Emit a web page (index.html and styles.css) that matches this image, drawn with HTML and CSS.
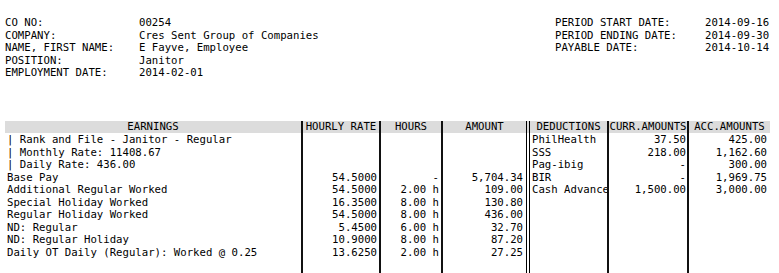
FILE: index.html
```html
<!DOCTYPE html>
<html>
<head>
<meta charset="utf-8">
<title>Payslip</title>
<link rel="stylesheet" href="styles.css">
</head>
<body>
<div class="info">
  <div class="info-block">
    <div class="info-row"><span class="lbl-l">CO NO:</span><span>00254</span></div>
    <div class="info-row"><span class="lbl-l">COMPANY:</span><span>Cres Sent Group of Companies</span></div>
    <div class="info-row"><span class="lbl-l">NAME, FIRST NAME:</span><span>E Fayve, Employee</span></div>
    <div class="info-row"><span class="lbl-l">POSITION:</span><span>Janitor</span></div>
    <div class="info-row"><span class="lbl-l">EMPLOYMENT DATE:</span><span>2014-02-01</span></div>
  </div>
  <div class="info-block">
    <div class="info-row"><span class="lbl-r">PERIOD START DATE:</span><span class="val-r">2014-09-16</span></div>
    <div class="info-row"><span class="lbl-r">PERIOD ENDING DATE:</span><span class="val-r">2014-09-30</span></div>
    <div class="info-row"><span class="lbl-r">PAYABLE DATE:</span><span class="val-r">2014-10-14</span></div>
  </div>
</div>

<div class="slip">
  <div class="hd">EARNINGS</div>
  <div class="hd sep">HOURLY RATE</div>
  <div class="hd sep">HOURS</div>
  <div class="hd sep">AMOUNT</div>
  <div class="hd dbl">DEDUCTIONS</div>
  <div class="hd sep">CURR.AMOUNTS</div>
  <div class="hd sep">ACC.AMOUNTS</div>

  <div class="bd left">
    <div class="ln">| Rank and File - Janitor - Regular</div>
    <div class="ln">| Monthly Rate: 11408.67</div>
    <div class="ln">| Daily Rate: 436.00</div>
    <div class="ln">Base Pay</div>
    <div class="ln">Additional Regular Worked</div>
    <div class="ln">Special Holiday Worked</div>
    <div class="ln">Regular Holiday Worked</div>
    <div class="ln">ND: Regular</div>
    <div class="ln">ND: Regular Holiday</div>
    <div class="ln">Daily OT Daily (Regular): Worked @ 0.25</div>
  </div>
  <div class="bd sep num">
    <div class="ln">&nbsp;</div>
    <div class="ln">&nbsp;</div>
    <div class="ln">&nbsp;</div>
    <div class="ln">54.5000</div>
    <div class="ln">54.5000</div>
    <div class="ln">16.3500</div>
    <div class="ln">54.5000</div>
    <div class="ln">5.4500</div>
    <div class="ln">10.9000</div>
    <div class="ln">13.6250</div>
  </div>
  <div class="bd sep num">
    <div class="ln">&nbsp;</div>
    <div class="ln">&nbsp;</div>
    <div class="ln">&nbsp;</div>
    <div class="ln">-</div>
    <div class="ln">2.00 h</div>
    <div class="ln">8.00 h</div>
    <div class="ln">8.00 h</div>
    <div class="ln">6.00 h</div>
    <div class="ln">8.00 h</div>
    <div class="ln">2.00 h</div>
  </div>
  <div class="bd sep num amt">
    <div class="ln">&nbsp;</div>
    <div class="ln">&nbsp;</div>
    <div class="ln">&nbsp;</div>
    <div class="ln">5,704.34</div>
    <div class="ln">109.00</div>
    <div class="ln">130.80</div>
    <div class="ln">436.00</div>
    <div class="ln">32.70</div>
    <div class="ln">87.20</div>
    <div class="ln">27.25</div>
  </div>
  <div class="bd dbl left">
    <div class="ln">PhilHealth</div>
    <div class="ln">SSS</div>
    <div class="ln">Pag-ibig</div>
    <div class="ln">BIR</div>
    <div class="ln">Cash Advance</div>
  </div>
  <div class="bd sep num curr">
    <div class="ln">37.50</div>
    <div class="ln">218.00</div>
    <div class="ln">-</div>
    <div class="ln">-</div>
    <div class="ln">1,500.00</div>
  </div>
  <div class="bd sep num acc">
    <div class="ln">425.00</div>
    <div class="ln">1,162.60</div>
    <div class="ln">300.00</div>
    <div class="ln">1,969.75</div>
    <div class="ln">3,000.00</div>
  </div>
</div>
</body>
</html>
```

FILE: styles.css
```css
html, body {
  margin: 0;
  padding: 0;
  background: #fff;
}
body {
  padding: 17px 4px 0 5px;
  font-family: "DejaVu Sans Mono", "Liberation Mono", monospace;
  font-size: 10.667px;
  line-height: 12.5px;
  color: #000;
}
.info {
  display: flex;
  justify-content: space-between;
  width: 765px;
}
.info-row {
  display: flex;
  white-space: pre;
}
.lbl-l {
  width: 134px;
}
.lbl-r {
  width: 150px;
}
.val-r {
  width: 65px;
}
.slip {
  margin-top: 41px;
  width: 765px;
  display: grid;
  grid-template-columns: 296px 78px 62px 85px 81px 80px 83px;
}
.hd {
  background: #dcdcdc;
  text-align: center;
  height: 12px;
  line-height: 12px;
  white-space: pre;
  overflow: hidden;
}
.bd {
  padding: 1.5px 2px 14px 2px;
}
.sep {
  border-left: 2px solid #111;
}
.dbl {
  border-left: 4px double #000;
}
.left {
  text-align: left;
}
.num {
  text-align: right;
}
.amt {
  padding-right: 3px;
}
.curr {
  padding-right: 1px;
}
.acc {
  padding-right: 3px;
}
.ln {
  height: 12.5px;
  white-space: pre;
}
```
